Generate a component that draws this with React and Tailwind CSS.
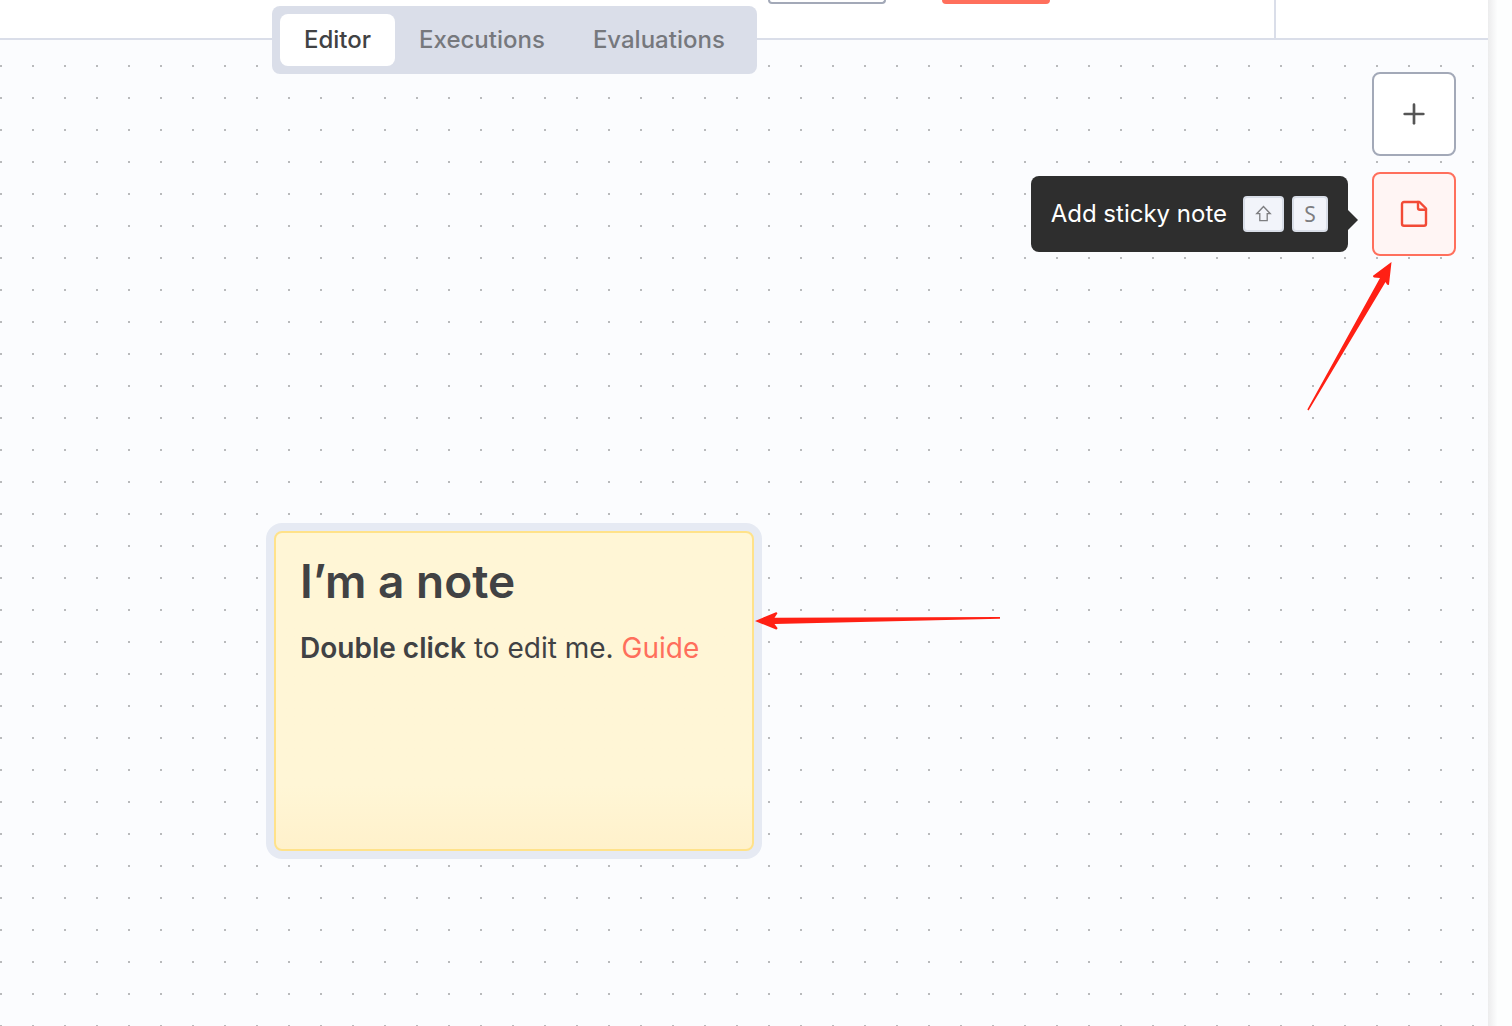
import { useState } from "react";
import { Plus } from "lucide-react";

const TABS = ["Editor", "Executions", "Evaluations"];

function StickyIcon() {
  return (
    <svg
      viewBox="0 0 28 28"
      className="h-7 w-7"
      fill="none"
      stroke="currentColor"
      strokeWidth="2.4"
      strokeLinecap="round"
      strokeLinejoin="round"
      aria-hidden="true"
    >
      <path d="M19.5 2H4a2 2 0 0 0-2 2v19.7a2 2 0 0 0 2 2H24a2 2 0 0 0 2-2V8.5Z" />
      <path d="M18 2v5.8a2 2 0 0 0 2 2H26" />
    </svg>
  );
}

function ShiftIcon() {
  return (
    <svg
      viewBox="0 0 17 18"
      className="h-[18px] w-[17px]"
      fill="none"
      stroke="currentColor"
      strokeWidth="1.3"
      aria-hidden="true"
    >
      <path d="M8.500 1.500 1.700 8.700H4.800v7h7.400v-7h3.100Z" />
    </svg>
  );
}

function Key({ children }) {
  return (
    <kbd className="flex h-9 min-w-9 items-center justify-center rounded-sm border-2 border-[#d9dee8] bg-[#f2f4fa] px-[10px] font-sans text-[21px] leading-none text-[#7d7d80]">
      {children}
    </kbd>
  );
}

function Header() {
  return (
    <header className="flex h-10 items-start justify-end border-b-2 border-[#dadee9] bg-white">
      <div className="mr-56 flex gap-14">
        <button
          type="button"
          aria-label="Share"
          className="h-1 w-[118px] rounded-b-lg border-2 border-t-0 border-[#a3a9b8] bg-white"
        />
        <button type="button" aria-label="Save" className="h-1 w-[108px] rounded-b-lg bg-[#ff6f5c]" />
      </div>
      <div className="w-[214px] self-stretch border-l-2 border-[#dadee9]" />
    </header>
  );
}

function ViewTabs() {
  const [active, setActive] = useState("Editor");

  return (
    <nav className="absolute left-[272px] top-[6px] flex rounded-lg bg-[#dadee9] p-2">
      {TABS.map((tab) => (
        <button
          key={tab}
          type="button"
          onClick={() => setActive(tab)}
          className={`h-[52px] rounded-lg px-6 text-2xl font-medium ${
            tab === active ? "bg-white text-[#414244]" : "text-[#76787d]"
          }`}
        >
          {tab}
        </button>
      ))}
    </nav>
  );
}

function StickyNote() {
  return (
    <article className="absolute left-[274px] top-[491px] h-[320px] w-[480px] rounded-lg border-2 border-[#ffe28a] bg-[#fff6d6] bg-linear-to-b from-[#fff6d6] from-80% to-[#fff1cb] px-6 py-5 text-[#414244] ring-8 ring-[#e6eaf3]">
      <h1 className="text-[46px] leading-[56px] font-semibold">I’m a note</h1>
      <p className="mt-5 text-[28px] leading-[38px]">
        <strong className="font-semibold">Double click</strong> to edit me.{" "}
        <a href="#guide" className="text-[#ff6f5c]">
          Guide
        </a>
      </p>
    </article>
  );
}

function CanvasButtons() {
  return (
    <div className="flex flex-col items-end gap-4 px-8 pt-8">
      <button
        type="button"
        aria-label="Add node"
        className="flex size-[84px] items-center justify-center rounded-lg border-2 border-[#a3a9b8] bg-white text-[#555555]"
      >
        <Plus size={32} strokeWidth={2} />
      </button>
      <div className="flex items-center gap-6">
        <div
          role="tooltip"
          className="relative flex h-[76px] items-center gap-2 rounded-lg bg-[#2e2e2e] px-5 text-2xl text-white"
        >
          <span className="mr-2">Add sticky note</span>
          <Key>
            <ShiftIcon />
          </Key>
          <Key>S</Key>
          <svg viewBox="0 0 10 20" className="absolute top-[34px] left-full h-5 w-[10px] fill-[#2e2e2e]">
            <path d="M0 0 10 10 0 20Z" />
          </svg>
        </div>
        <button
          type="button"
          aria-label="Add sticky note"
          className="flex size-[84px] items-center justify-center rounded-lg border-2 border-[#ff6f5c] bg-[#fff5f4] text-[#f24a36]"
        >
          <StickyIcon />
        </button>
      </div>
    </div>
  );
}

// Red pointers drawn over the canvas
function Pointers() {
  return (
    <>
      <svg
        viewBox="0 0 88 152"
        className="pointer-events-none absolute top-[220px] left-[1306px] h-[152px] w-[88px] fill-[#ff2014]"
      >
        <path d="M85.5 2 67 15.700Q66.800 17 68 17.500L74 18 1.300 149.500 2.600 150.500 79.500 22 81 24.600Q82.200 25.500 83 24.500Z" />
      </svg>
      <svg
        viewBox="0 0 248 22"
        className="pointer-events-none absolute top-[570px] left-[754px] h-[22px] w-[248px] fill-[#ff2014]"
      >
        <path d="M1 11 22 2.300Q24 2.500 23 4L20.500 7.800 246 7V8.800L20.500 14 23.500 18Q23.500 20 21.500 19.300Z" />
      </svg>
    </>
  );
}

export default function App() {
  return (
    <div className="flex min-h-screen bg-[#fdfefe] font-['Inter',sans-serif]">
      <div className="relative flex min-w-0 flex-1 flex-col overflow-hidden">
        <Header />
        <main className="relative flex-1 bg-[#fbfcfe] bg-[conic-gradient(from_270deg_at_2px_2px,#b9babc_90deg,transparent_90deg)] bg-size-[32px_32px] bg-position-[0_25px]">
          <CanvasButtons />
          <StickyNote />
          <Pointers />
        </main>
        <ViewTabs />
      </div>
      <div className="w-6 bg-linear-to-r from-[#ececed] to-[#fdfefe] to-40%" />
    </div>
  );
}
